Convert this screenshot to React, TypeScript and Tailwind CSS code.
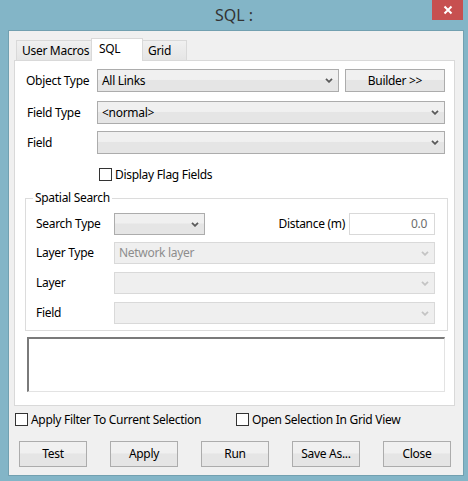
import React from "react";

const font = { fontFamily: '"Noto Sans", "Open Sans", sans-serif' };

function Chevron({ disabled }: { disabled?: boolean }) {
  return (
    <svg width="8" height="5" viewBox="0 0 8 5" className="shrink-0">
      <polyline
        points="1,0.8 4,3.8 7,0.8"
        fill="none"
        stroke={disabled ? "#c4c4c4" : "#5a5a5a"}
        strokeWidth="1.8"
      />
    </svg>
  );
}

function Combo({
  text,
  className,
  disabled,
}: {
  text?: string;
  className?: string;
  disabled?: boolean;
}) {
  return (
    <div
      className={
        "flex items-center justify-between pl-[4px] pr-[5px] border " +
        (disabled
          ? "border-[#d9d9d9] bg-[#efefef] text-[#8d8d8d] "
          : "border-[#acacac] bg-[linear-gradient(#f0f0f0_0%,#f0f0f0_45%,#e5e5e5_50%,#e5e5e5_100%)] text-black ") +
        (className || "")
      }
    >
      <span className="leading-none whitespace-nowrap">{text}</span>
      <Chevron disabled={disabled} />
    </div>
  );
}

function Button({ label, className }: { label: string; className?: string }) {
  return (
    <div
      className={
        "flex items-center justify-center whitespace-nowrap border border-[#acacac] bg-[linear-gradient(#f0f0f0_0%,#f0f0f0_45%,#e5e5e5_50%,#e5e5e5_100%)] text-black " +
        (className || "")
      }
    >
      {label}
    </div>
  );
}

function Check({ label, className }: { label: string; className?: string }) {
  return (
    <div className={"flex items-center " + (className || "")}>
      <div className="w-[13px] h-[13px] border border-[#333333] bg-white shrink-0" />
      <span className="ml-[3px] leading-none whitespace-nowrap">{label}</span>
    </div>
  );
}

export default function App() {
  return (
    <div
      className="w-[468px] h-[481px] bg-[#83b5c7] flex flex-col text-[12px] tracking-[-0.3px] text-black overflow-hidden"
      style={font}
    >
      {/* Title bar */}
      <div className="h-[30px] flex relative">
        <div className="flex-1 flex items-center justify-center pb-[1px] text-[16px] tracking-normal text-[#333333]">
          SQL :
        </div>
        <div className="absolute left-[432px] top-0 w-[31px] h-[20px] bg-[#c75050] flex items-center justify-center">
          <svg width="10" height="10" viewBox="0 0 10 10">
            <path d="M1.5 1.5 L8.5 8.5 M8.5 1.5 L1.5 8.5" stroke="white" strokeWidth="2" />
          </svg>
        </div>
      </div>

      {/* Content */}
      <div className="ml-[8px] w-[456px] h-[446px] border border-[#72a0b0] bg-[#f0f0f0] flex flex-col">
        {/* Tabs */}
        <div className="mt-[7px] ml-[7px] h-[22px] flex items-end relative z-10">
          <div className="w-[76px] h-[20px] border border-b-0 border-[#d9d9d9] bg-[linear-gradient(#f0f0f0,#e5e5e5)] pl-[5px] flex items-center whitespace-nowrap">
            User Macros
          </div>
          <div className="-ml-[1px] w-[52px] h-[23px] -mb-[1px] border border-b-0 border-[#d9d9d9] bg-white pl-[7px] pb-[3px] flex items-center">
            SQL
          </div>
          <div className="-ml-[1px] w-[45px] h-[20px] border border-b-0 border-[#d9d9d9] bg-[linear-gradient(#f0f0f0,#e5e5e5)] pl-[5px] flex items-center">
            Grid
          </div>
        </div>

        {/* Panel */}
        <div className="ml-[5px] w-[441px] h-[346px] border border-[#d9d9d9] bg-white flex flex-col pt-[8px] pl-[11px]">
          <div className="flex items-center h-[23px]">
            <div className="w-[71px] whitespace-nowrap">Object Type</div>
            <Combo text="All Links" className="w-[242px] h-[23px]" />
            <Button label="Builder >>" className="ml-[6px] w-[100px] h-[23px]" />
          </div>
          <div className="flex items-center mt-[9px]">
            <div className="w-[71px] pl-[1px]">Field Type</div>
            <Combo text="<normal>" className="w-[348px] h-[23px]" />
          </div>
          <div className="flex items-center mt-[7px]">
            <div className="w-[71px] pl-[1px]">Field</div>
            <Combo text="" className="w-[348px] h-[23px]" />
          </div>
          <Check label="Display Flag Fields" className="ml-[73px] mt-[14px]" />

          <fieldset className="mt-[9px] -ml-[1px] w-[423px] border border-[#dcdcdc] pl-[10px] pr-[12px] pb-[6px]">
            <legend className="ml-[-3px] px-[2px] leading-[16px]">Spatial Search</legend>
            <div className="flex items-center mt-[7px] h-[22px]">
              <div className="w-[78px]">Search Type</div>
              <Combo text="" className="w-[91px] h-[22px]" />
              <div className="flex-1" />
              <div>Distance (m)</div>
              <div className="ml-[4px] w-[86px] h-[22px] border border-[#d9d9d9] bg-white flex items-center justify-end pr-[7px] text-[#6d6d6d]">
                0.0
              </div>
            </div>
            <div className="flex items-center mt-[7px]">
              <div className="w-[78px]">Layer Type</div>
              <Combo text="Network layer" disabled className="flex-1 h-[22px]" />
            </div>
            <div className="flex items-center mt-[8px]">
              <div className="w-[78px]">Layer</div>
              <Combo text="" disabled className="flex-1 h-[22px]" />
            </div>
            <div className="flex items-center mt-[8px]">
              <div className="w-[78px]">Field</div>
              <Combo text="" disabled className="flex-1 h-[22px]" />
            </div>
          </fieldset>

          <div className="mt-[6px] ml-[1px] w-[418px] h-[55px] bg-white border-t-2 border-l-2 border-r border-b border-t-[#7a7a7a] border-l-[#7a7a7a] border-r-[#e3e3e3] border-b-[#e3e3e3]" />
        </div>

        {/* Bottom checkboxes */}
        <div className="flex mt-[7px] ml-[6px] h-[13px]">
          <Check label="Apply Filter To Current Selection" className="w-[221px]" />
          <Check label="Open Selection In Grid View" />
        </div>

        {/* Buttons */}
        <div className="flex mt-[15px] ml-[10px] gap-[23px]">
          <Button label="Test" className="w-[68px] h-[26px]" />
          <Button label="Apply" className="w-[68px] h-[26px]" />
          <Button label="Run" className="w-[68px] h-[26px]" />
          <Button label="Save As..." className="w-[68px] h-[26px]" />
          <Button label="Close" className="w-[68px] h-[26px]" />
        </div>
      </div>
    </div>
  );
}
